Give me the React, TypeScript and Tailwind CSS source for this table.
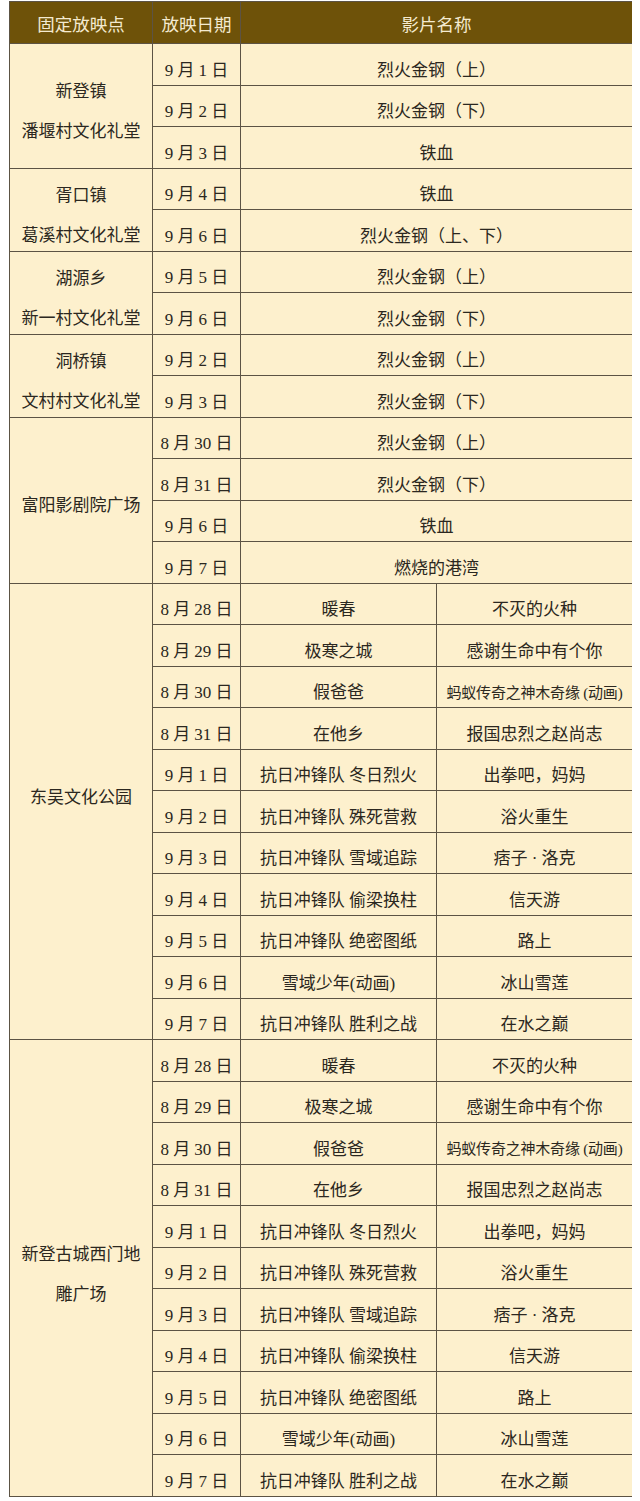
import React from "react";

type Row = { date: string; films: string[] };
type Group = { place: string[]; rows: Row[]; pad: string };

const A = (d: string, a: string, b: string): Row => ({ date: d, films: [a, b] });
const S = (d: string, a: string): Row => ({ date: d, films: [a] });

const longRows = (): Row[] => [
  A("8 月 28 日", "暖春", "不灭的火种"),
  A("8 月 29 日", "极寒之城", "感谢生命中有个你"),
  A("8 月 30 日", "假爸爸", "蚂蚁传奇之神木奇缘 (动画)"),
  A("8 月 31 日", "在他乡", "报国忠烈之赵尚志"),
  A("9 月 1 日", "抗日冲锋队 冬日烈火", "出拳吧，妈妈"),
  A("9 月 2 日", "抗日冲锋队 殊死营救", "浴火重生"),
  A("9 月 3 日", "抗日冲锋队 雪域追踪", "痞子 · 洛克"),
  A("9 月 4 日", "抗日冲锋队 偷梁换柱", "信天游"),
  A("9 月 5 日", "抗日冲锋队 绝密图纸", "路上"),
  A("9 月 6 日", "雪域少年(动画)", "冰山雪莲"),
  A("9 月 7 日", "抗日冲锋队 胜利之战", "在水之巅"),
];

const groups: Group[] = [
  {
    place: ["新登镇", "潘堰村文化礼堂"],
    pad: "pt-[12px]",
    rows: [S("9 月 1 日", "烈火金钢（上）"), S("9 月 2 日", "烈火金钢（下）"), S("9 月 3 日", "铁血")],
  },
  {
    place: ["胥口镇", "葛溪村文化礼堂"],
    pad: "pt-[12px]",
    rows: [S("9 月 4 日", "铁血"), S("9 月 6 日", "烈火金钢（上、下）")],
  },
  {
    place: ["湖源乡", "新一村文化礼堂"],
    pad: "pt-[12px]",
    rows: [S("9 月 5 日", "烈火金钢（上）"), S("9 月 6 日", "烈火金钢（下）")],
  },
  {
    place: ["洞桥镇", "文村村文化礼堂"],
    pad: "pt-[12px]",
    rows: [S("9 月 2 日", "烈火金钢（上）"), S("9 月 3 日", "烈火金钢（下）")],
  },
  {
    place: ["富阳影剧院广场"],
    pad: "pt-[12px]",
    rows: [
      S("8 月 30 日", "烈火金钢（上）"),
      S("8 月 31 日", "烈火金钢（下）"),
      S("9 月 6 日", "铁血"),
      S("9 月 7 日", "燃烧的港湾"),
    ],
  },
  { place: ["东吴文化公园"], pad: "pb-[26px]", rows: longRows() },
  { place: ["新登古城西门地", "雕广场"], pad: "pt-[14px]", rows: longRows() },
];

const spanCls: Record<number, string> = {
  2: "row-span-2",
  3: "row-span-3",
  4: "row-span-4",
  11: "row-span-11",
};

const base = "bg-[#fdf0cd] flex items-center justify-center pt-[12px] whitespace-nowrap";
const cell = `${base} text-[17px]`;
const narrow = `${base} text-[15px] tracking-[-0.2px]`;
const head =
  "bg-[#6e5209] text-[#f4ead0] text-[17.5px] flex items-center justify-center pt-[4px]";

export default function App() {
  return (
    <div
      className="w-[640px] h-[1501px] bg-white pl-[9px] pt-[1px] text-[#2b2720]"
      style={{ fontFamily: '"Liberation Serif", "Noto Sans CJK SC", serif' }}
    >
      <div className="w-[623px] bg-[#5c5344] p-px grid gap-px grid-cols-[142px_87px_195px_195px] grid-rows-[41px] auto-rows-[40.5px]">
        <div className={head} style={{ fontFamily: '"Noto Sans CJK SC", sans-serif' }}>
          固定放映点
        </div>
        <div className={head} style={{ fontFamily: '"Noto Sans CJK SC", sans-serif' }}>
          放映日期
        </div>
        <div className={`${head} col-span-2`} style={{ fontFamily: '"Noto Sans CJK SC", sans-serif' }}>
          影片名称
        </div>
        {groups.map((g, gi) => (
          <React.Fragment key={gi}>
            <div
              className={`${spanCls[g.rows.length]} bg-[#fdf0cd] flex flex-col items-center justify-center text-[17px] leading-[40px] ${g.pad}`}
            >
              {g.place.map((p, i) => (
                <div key={i}>{p}</div>
              ))}
            </div>
            {g.rows.map((r, ri) => (
              <React.Fragment key={ri}>
                <div className={cell}>{r.date}</div>
                {r.films.length === 1 ? (
                  <div className={`${cell} col-span-2`}>{r.films[0]}</div>
                ) : (
                  <>
                    <div className={cell}>{r.films[0]}</div>
                    <div className={r.films[1].length > 10 ? narrow : cell}>{r.films[1]}</div>
                  </>
                )}
              </React.Fragment>
            ))}
          </React.Fragment>
        ))}
      </div>
    </div>
  );
}
